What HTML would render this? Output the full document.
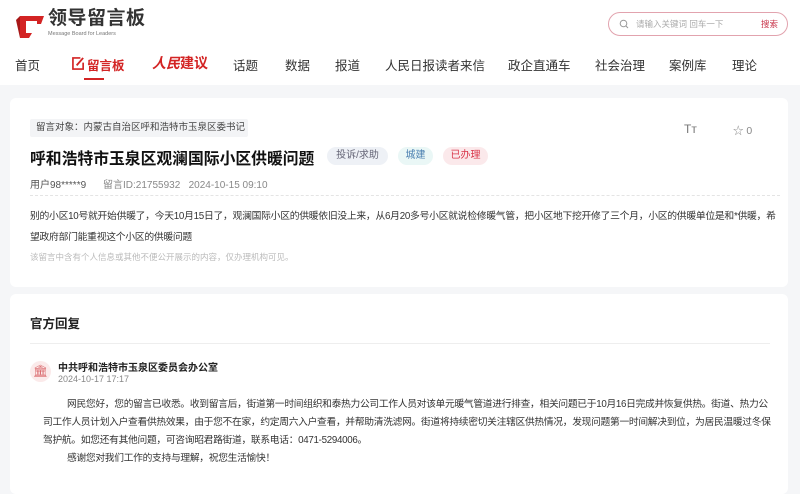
<!DOCTYPE html>
<html><head><meta charset="utf-8"><style>
*{margin:0;padding:0;box-sizing:border-box}
body{width:800px;height:473px;overflow:hidden;background:#f5f6f8;font-family:"Liberation Sans","Noto Sans CJK SC",sans-serif;color:#333;position:relative}
.a{position:absolute;white-space:nowrap}
header{position:absolute;left:0;top:0;width:800px;height:85px;background:#fff}
.nav{font-size:12.5px;color:#333;top:55px}
.card{position:absolute;left:10px;width:778px;background:#fff;border-radius:6px}
.tag{position:absolute;height:18px;border-radius:9px;font-size:10px;line-height:18px;text-align:center}
p.t{font-size:9.75px;line-height:18px;color:#333;letter-spacing:-0.3px}
</style></head><body>
<header>
<svg class="a" style="left:16px;top:12px" width="30" height="26" viewBox="0 0 30 26"><path d="M4 4h24l-3 8h-4V9H10v12h6l-3 5H4z" fill="#d32424"/><path d="M0 8l4-4v22z" fill="#a81818"/></svg>
<div class="a" style="left:48px;top:8px;font-size:19px;line-height:22px;font-weight:bold;color:#333;letter-spacing:0.5px">领导留言板</div>
<div class="a" style="left:48px;top:31px;font-size:5.5px;color:#777">Message Board for Leaders</div>
<div class="a" style="left:608px;top:12px;width:180px;height:24px;border:1px solid #e2a3ae;border-radius:12px"></div>
<svg class="a" style="left:619px;top:19px" width="10" height="10" viewBox="0 0 10 10"><circle cx="4.5" cy="4.5" r="3.3" fill="none" stroke="#999" stroke-width="1"/><path d="M7 7l2 2" stroke="#999"/></svg>
<div class="a" style="left:636px;top:18px;font-size:8.5px;color:#aaa">请输入关键词 回车一下</div>
<div class="a" style="left:761px;top:18px;font-size:8.5px;color:#c8344a">搜索</div>
<div class="a nav" style="left:15px">首页</div>
<svg class="a" style="left:72px;top:57px" width="13" height="13" viewBox="0 0 14 14"><path d="M9 1H1v12h11V6" fill="none" stroke="#d32424" stroke-width="1.8"/><path d="M5 9l7-8" stroke="#d32424" stroke-width="2"/></svg>
<div class="a nav" style="left:87px;color:#d32424;font-weight:bold">留言板</div>
<div class="a" style="left:84px;top:78px;width:20px;height:2px;background:#d32424"></div>
<div class="a nav" style="left:152px;top:53px;color:#d32424;font-weight:bold;font-style:italic;font-size:14px">人民<span style="font-style:normal">建议</span></div>
<div class="a nav" style="left:233px">话题</div>
<div class="a nav" style="left:285px">数据</div>
<div class="a nav" style="left:335px">报道</div>
<div class="a nav" style="left:385px">人民日报读者来信</div>
<div class="a nav" style="left:508px">政企直通车</div>
<div class="a nav" style="left:595px">社会治理</div>
<div class="a nav" style="left:669px">案例库</div>
<div class="a nav" style="left:732px">理论</div>
</header>
<div class="card" style="top:98px;height:189px"></div>
<div class="a" style="left:30px;top:119px;width:218px;height:18px;background:#f3f4f6;border-radius:2px;font-size:9.5px;line-height:18px;padding-left:6px;color:#444">留言对象：内蒙古自治区呼和浩特市玉泉区委书记</div>
<div class="a" style="left:30px;top:146px;font-size:15.8px;font-weight:bold;color:#111">呼和浩特市玉泉区观澜国际小区供暖问题</div>
<div class="tag a" style="left:327px;top:147px;width:61px;background:#eef1f6;color:#667">投诉/求助</div>
<div class="tag a" style="left:398px;top:147px;width:35px;background:#eaf7f6;color:#4a7fb0">城建</div>
<div class="tag a" style="left:443px;top:147px;width:45px;background:#fbe9eb;color:#d9364a">已办理</div>
<div class="a" style="left:30px;top:176px;font-size:10px;color:#555">用户98*****9</div>
<div class="a" style="left:103px;top:176px;font-size:10px;color:#888">留言ID:21755932&nbsp;&nbsp;&nbsp;2024-10-15 09:10</div>
<div class="a" style="left:30px;top:195px;width:750px;border-top:1px dashed #e4e4e4"></div>
<div class="a" style="left:684px;top:122px;font-size:12px;color:#777">Tт</div>
<div class="a" style="left:733px;top:123px;font-size:10.5px;color:#888">☆ 0</div>
<div class="a" style="left:30px;top:206px;width:752px;white-space:normal;font-size:9.8px;line-height:21px;color:#333;letter-spacing:-0.27px">别的小区10号就开始供暖了，今天10月15日了，观澜国际小区的供暖依旧没上来，从6月20多号小区就说检修暖气管，把小区地下挖开修了三个月，小区的供暖单位是和*供暖，希望政府部门能重视这个小区的供暖问题</div>
<div class="a" style="left:30px;top:251px;font-size:8.5px;color:#bbb">该留言中含有个人信息或其他不便公开展示的内容，仅办理机构可见。</div>
<div class="card" style="top:294px;height:200px"></div>
<div class="a" style="left:30px;top:313px;font-size:12.5px;font-weight:bold;color:#222">官方回复</div>
<div class="a" style="left:30px;top:343px;width:740px;border-top:1px solid #eee"></div>
<div class="a" style="left:30px;top:361px;width:21px;height:21px;border-radius:50%;background:#fbeaea;color:#d9666a;font-size:12px;line-height:21px;text-align:center">🏛</div>
<div class="a" style="left:58px;top:359px;font-size:10px;font-weight:bold;color:#222">中共呼和浩特市玉泉区委员会办公室</div>
<div class="a" style="left:58px;top:374px;font-size:9px;color:#888">2024-10-17 17:17</div>
<div class="a" style="left:43px;top:396px;width:730px;white-space:normal">
<p class="t" style="text-indent:24px">网民您好，您的留言已收悉。收到留言后，街道第一时间组织和泰热力公司工作人员对该单元暖气管道进行排查，相关问题已于10月16日完成并恢复供热。街道、热力公司工作人员计划入户查看供热效果，由于您不在家，约定周六入户查看，并帮助清洗滤网。街道将持续密切关注辖区供热情况，发现问题第一时间解决到位，为居民温暖过冬保驾护航。如您还有其他问题，可咨询昭君路街道，联系电话：0471-5294006。</p>
<p class="t" style="text-indent:24px">感谢您对我们工作的支持与理解，祝您生活愉快！</p>
</div>
</body></html>
